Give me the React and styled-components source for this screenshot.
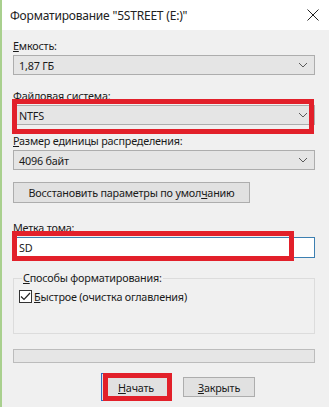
import React from "react";
import styled, { createGlobalStyle } from "styled-components";

const GlobalStyle = createGlobalStyle`
  html, body {
    margin: 0;
    padding: 0;
    background: #f0f0f0;
  }
  * {
    box-sizing: border-box;
  }
`;

const Window = styled.div`
  width: 329px;
  height: 407px;
  display: flex;
  flex-direction: column;
  background: #f0f0f0;
  border-left: 2px solid #a9d08e;
  font-family: "Segoe UI", "Noto Sans", sans-serif;
  font-size: 10.8px;
  letter-spacing: -0.2px;
  color: #1a1a1a;
  overflow: hidden;
`;

const TitleBar = styled.div`
  height: 30px;
  flex: none;
  display: flex;
  align-items: center;
  justify-content: space-between;
  background: #fff;
  padding: 0 10px 0 8px;
  font-size: 12px;
  color: #222;
`;

const Content = styled.div`
  width: 327px;
  display: flex;
  flex-direction: column;
  padding: 8px 14px 0 11px;
`;

const Label = styled.div`
  height: 16px;
  line-height: 16px;
  margin-top: ${({ top }) => top || 0}px;
  margin-bottom: 1px;
  white-space: nowrap;
`;

const Ul = styled.span`
  text-decoration: underline;
  text-underline-offset: 1px;
`;

const Field = styled.div`
  position: relative;
`;

const Combo = styled.div`
  width: 302px;
  height: 20px;
  display: flex;
  align-items: center;
  justify-content: space-between;
  padding: 0 6px 0 5px;
  background: #e5e5e5;
  border: 1px solid #adadad;
`;

const TextInput = styled.div`
  width: 302px;
  height: 21px;
  display: flex;
  align-items: center;
  padding: 0 5px;
  background: #fff;
  border: 1px solid #3c7fb1;
`;

const Highlight = styled.div`
  position: absolute;
  left: ${({ l }) => l}px;
  top: ${({ t }) => t}px;
  width: ${({ w }) => w}px;
  height: ${({ h }) => h}px;
  border: 5px solid #e2202a;
  pointer-events: none;
`;

const ButtonWrap = styled.div`
  margin-top: 12px;
`;

const Button = styled.div`
  height: ${({ h }) => h || 21}px;
  width: ${({ w }) => w}px;
  display: flex;
  align-items: center;
  justify-content: center;
  background: #e1e1e1;
  border: 1px solid ${({ primary }) => (primary ? "#2f6cc0" : "#adadad")};
  white-space: nowrap;
`;

const Group = styled.fieldset`
  width: 302px;
  min-width: 0;
  margin: 13px 0 0 0;
  padding: 4px 6px 0 5px;
  height: 63px;
  border: 1px solid #dcdcdc;
  border-radius: 0;
`;

const Legend = styled.legend`
  padding: 0 1px;
  margin-left: 3px;
  line-height: 14px;
`;

const CheckRow = styled.div`
  display: flex;
  align-items: center;
  gap: 2px;
`;

const Box = styled.div`
  width: 13px;
  height: 13px;
  border: 1px solid #333;
  background: #fff;
  display: flex;
  align-items: center;
  justify-content: center;
`;

const Progress = styled.div`
  width: 302px;
  margin-top: 15px;
  height: 14px;
  background: #e6e6e6;
  border: 1px solid #bcbcbc;
`;

const ButtonRow = styled.div`
  margin-top: 10px;
  display: flex;
  align-items: center;
  gap: 12px;
  padding-left: 88px;
`;

const Chevron = () => (
  <svg width="10" height="6" viewBox="0 0 10 6">
    <path d="M1 1 L5 5 L9 1" fill="none" stroke="#5a5a5a" strokeWidth="1" />
  </svg>
);

export default function App() {
  return (
    <>
      <GlobalStyle />
      <Window>
        <TitleBar>
          <span>Форматирование "5STREET (E:)"</span>
          <svg width="12" height="12" viewBox="0 0 12 12">
            <path d="M0.5 0.5 L11.5 11.5 M11.5 0.5 L0.5 11.5" stroke="#222" strokeWidth="1" />
          </svg>
        </TitleBar>
        <Content>
          <Label><Ul>Е</Ul>мкость:</Label>
          <Combo>
            <span>1,87 ГБ</span>
            <Chevron />
          </Combo>

          <Label top={13}><Ul>Ф</Ul>айловая система:</Label>
          <Field>
            <Combo>
              <span>NTFS</span>
              <Chevron />
            </Combo>
            <Highlight l={-1} t={-6} w={302} h={35} />
          </Field>

          <Label top={8}><Ul>Р</Ul>азмер единицы распределения:</Label>
          <Combo>
            <span>4096 байт</span>
            <Chevron />
          </Combo>

          <ButtonWrap>
            <Button w={237}>
              <span>Восстановить параметры по умол<Ul>ч</Ul>анию</span>
            </Button>
          </ButtonWrap>

          <Label top={17}><Ul>М</Ul>етка тома:</Label>
          <Field>
            <TextInput>SD</TextInput>
            <Highlight l={-1} t={-6} w={282} h={30} />
          </Field>

          <Group>
            <Legend><Ul>С</Ul>пособы форматирования:</Legend>
            <CheckRow>
              <Box>
                <svg width="11" height="9" viewBox="0 0 11 9">
                  <path d="M1 4.5 L4 7.5 L10 1" fill="none" stroke="#222" strokeWidth="1.2" />
                </svg>
              </Box>
              <span><Ul>Б</Ul>ыстрое (очистка оглавления)</span>
            </CheckRow>
          </Group>

          <Progress />

          <ButtonRow>
            <Field>
              <Button w={70} h={28} primary>
                <span><Ul>Н</Ul>ачать</span>
              </Button>
              <Highlight l={2} t={0} w={69} h={28} />
            </Field>
            <Button w={72} h={20}>
              <span><Ul>З</Ul>акрыть</span>
            </Button>
          </ButtonRow>
        </Content>
      </Window>
    </>
  );
}
